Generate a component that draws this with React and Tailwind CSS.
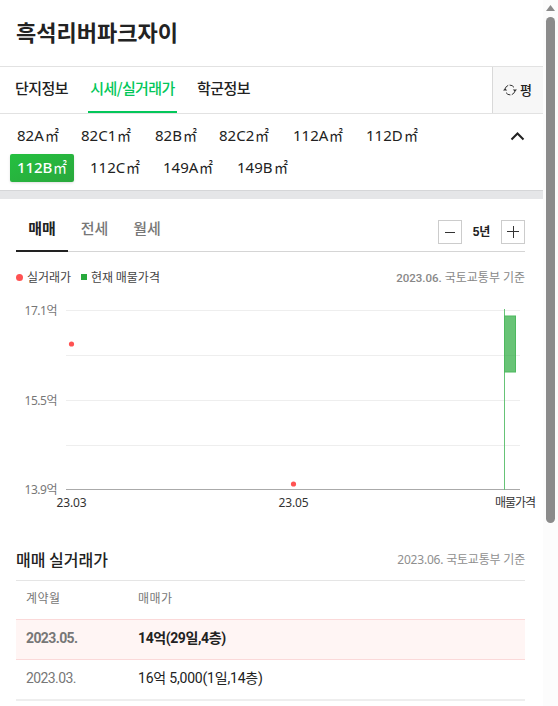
const pageTabs = [
  { name: "단지정보", width: "w-[53px]" },
  { name: "시세/실거래가", width: "w-[89px]" },
  { name: "학군정보", width: "w-[53px]" },
];

const areaRows = [
  [
    { name: "82A", width: "w-[55px]" },
    { name: "82C1", width: "w-[65px]" },
    { name: "82B", width: "w-[55px]" },
    { name: "82C2", width: "w-[65px]" },
    { name: "112A", width: "w-[64px]" },
    { name: "112D", width: "w-[64px]" },
  ],
  [
    { name: "112B", width: "w-[64px]" },
    { name: "112C", width: "w-[64px]" },
    { name: "149A", width: "w-[65px]" },
    { name: "149B", width: "w-[64px]" },
  ],
];

const gridLines = [11.5, 56.5, 101.5, 146.5];

const yLabels = [
  { label: "17.1억", y: 16 },
  { label: "15.5억", y: 106 },
  { label: "13.9억", y: 195 },
];

const deals = [
  { month: "2023.05.", price: "14억(29일,4층)", active: true },
  { month: "2023.03.", price: "16억 5,000(1일,14층)", active: false },
];

const RefreshIcon = () => (
  <svg width="14" height="12" viewBox="0 0 14 12" fill="none" stroke="#333" strokeWidth="1">
    <path d="M2.1 4.8A5 5 0 0 1 5.2 1.4M6.6 1.1A5 5 0 0 1 11 3.4" />
    <path d="M11.9 7.2A5 5 0 0 1 8.8 10.6M7.4 10.9A5 5 0 0 1 3 8.6" />
    <path d="M0 6.6h4.2L2.1 4.2zM9.8 5.4H14l-2.1 2.4z" fill="#333" stroke="none" />
  </svg>
);

const PriceChart = () => (
  <svg
    className="-mx-4 block h-[215px] w-[543px]"
    viewBox="0 0 543 215"
    fontFamily="'Noto Sans', 'Noto Sans CJK KR', sans-serif"
    fontSize="12"
  >
    {gridLines.map((y) => (
      <path key={y} d={`M66 ${y}H520`} stroke="#eee" />
    ))}
    <path d="M66 190.5H520" stroke="#aaa" />
    {yLabels.map(({ label, y }) => (
      <text key={label} x="24.5" y={y} fill="#777" textLength="33">
        {label}
      </text>
    ))}
    <circle cx="71.5" cy="45" r="2.6" fill="#ff5252" />
    <circle cx="293.5" cy="185" r="2.6" fill="#ff5252" />
    <path d="M504.5 10V191" stroke="#66c377" />
    <rect x="504.5" y="17" width="11" height="56" fill="#28a93c" fillOpacity="0.7" stroke="#4db95f" />
    <g fill="#333">
      <text x="56.5" y="208" textLength="30">23.03</text>
      <text x="278.5" y="208" textLength="30">23.05</text>
      <text x="495" y="208" textLength="41">매물가격</text>
    </g>
  </svg>
);

const Scrollbar = () => (
  <div className="flex h-full w-[15px] flex-col items-center bg-[#fcfcfc] pt-[5px]">
    <svg width="9" height="6" viewBox="0 0 9 6">
      <path d="M4.5 0L9 6H0z" fill="#8b8b8b" />
    </svg>
    <div className="mt-[6px] h-[506px] w-[9px] rounded-full bg-[#8b8b8b]" />
  </div>
);

const App = () => {
  return (
    <div className="flex h-[706px] w-[558px] overflow-hidden bg-white font-['Noto_Sans_CJK_KR',sans-serif] whitespace-nowrap text-[#222]">
      <main className="flex w-[543px] flex-col">
        <header className="flex h-[66px] items-center px-4 pb-1">
          <h1 className="text-[22px] leading-8 font-bold">흑석리버파크자이</h1>
        </header>

        <nav className="flex h-12 border-y border-[#e2e2e2]">
          <div className="flex flex-1 gap-5 pl-[15px]">
            {pageTabs.map(({ name, width }, i) => (
              <button
                key={name}
                className={`${width} border-b-2 pb-[2px] text-[15px] font-medium tracking-[-0.6px] ${
                  i === 1 ? "border-[#03c75a] text-[#03c75a]" : "border-transparent"
                }`}
              >
                {name}
              </button>
            ))}
          </div>
          <button className="flex w-[51px] items-center gap-1 border-l border-[#d9d9d9] bg-[#f7f7f7] pl-[10px] text-[13px] font-medium">
            <RefreshIcon />
            <span className="-mt-px -ml-px">평</span>
          </button>
        </nav>

        <section className="flex h-[76px] justify-between pt-2 pr-[18px] pl-[10px]">
          <div className="flex flex-col gap-1 font-['Noto_Sans','Noto_Sans_CJK_KR',sans-serif] text-[15px]">
            {areaRows.map((row, r) => (
              <div key={r} className="flex gap-[9px]">
                {row.map(({ name, width }) => (
                  <button
                    key={name}
                    className={`${width} h-7 rounded-xs pb-[2px] pl-[7px] text-left leading-[26px] ${
                      name === "112B"
                        ? "bg-linear-to-br from-[#24c040] to-[#29a83c] font-medium tracking-[-0.1px] text-white shadow-sm"
                        : ""
                    }`}
                  >
                    {name}
                    <span className="ml-px inline-block origin-left scale-x-[0.93] font-['Noto_Sans_CJK_KR',sans-serif] leading-none font-normal">
                      ㎡
                    </span>
                  </button>
                ))}
              </div>
            ))}
          </div>
          <svg className="mt-[9px]" width="15" height="10" viewBox="0 0 15 10" fill="none" stroke="#222" strokeWidth="2">
            <path d="M1.5 8.5L7.5 2.5L13.5 8.5" />
          </svg>
        </section>

        <div className="h-[9px] border-t border-[#d5d6d8] bg-[#e5e6e8]" />

        <section className="flex flex-col px-4 pt-[9px] pr-[18px]">
          <div className="flex h-11 items-stretch justify-between border-b border-[#d5d5d5]">
            <div className="-mb-px flex text-[15px]">
              <button className="w-[52px] border-b-2 border-[#222] pb-[2px] font-bold">매매</button>
              <button className="w-[53px] border-b-2 border-transparent pb-[2px] font-medium text-[#777]">전세</button>
              <button className="w-[52px] border-b-2 border-transparent pb-[2px] font-medium text-[#777]">월세</button>
            </div>
            <div className="mt-3 flex h-6 items-center">
              <button className="flex size-6 items-center justify-center border border-[#ccc]">
                <span className="mt-px h-px w-[10px] bg-[#333]" />
              </button>
              <span className="w-[39px] text-center font-['Liberation_Sans','Noto_Sans_CJK_KR',sans-serif] text-xs font-bold">
                5년
              </span>
              <button className="flex size-6 items-center justify-center border border-[#ccc]">
                <svg width="12" height="12" viewBox="0 0 12 12" stroke="#333">
                  <path d="M0 5.5H12M6.5 0V12" />
                </svg>
              </button>
            </div>
          </div>

          <div className="flex h-[47px] items-center pt-[3px] text-xs text-[#444]">
            <span className="mr-1 size-[7px] rounded-full bg-[#ff5252]" />
            <span className="w-[54px]">실거래가</span>
            <span className="mr-1 size-[6px] bg-[#28a93c]" />
            <span>현재 매물가격</span>
            <span className="mt-[2px] ml-auto font-['Roboto','Noto_Sans_CJK_KR',sans-serif] text-[#888]">
              <span className="text-[11.5px] font-medium">2023.06.</span> 국토교통부 기준
            </span>
          </div>

          <PriceChart />

          <div className="mt-[26px] flex h-10 items-center justify-between">
            <h2 className="-mt-[3px] text-base font-medium">매매 실거래가</h2>
            <span className="font-['Noto_Sans','Noto_Sans_CJK_KR',sans-serif] text-xs tracking-[-0.2px] text-[#8f8f8f]">
              2023.06. 국토교통부 기준
            </span>
          </div>

          <div className="border-t border-b-2 border-[#e5e5e5] border-b-[#eee]">
            <div className="flex h-[38px] items-center pb-[4px] pl-[10px] text-xs tracking-[0.4px] text-[#777]">
              <span className="w-28">계약월</span>
              <span>매매가</span>
            </div>
            {deals.map(({ month, price, active }) => (
              <div
                key={month}
                className={`flex items-center pb-[3px] pl-[10px] font-['Roboto','Noto_Sans_CJK_KR',sans-serif] text-[14px] ${
                  active ? "h-[41px] border-y border-[#fbd9d9] bg-[#fff5f4] font-bold" : "h-[39px]"
                }`}
              >
                <span className="w-28 tracking-[-0.6px] text-[#777]">{month}</span>
                <span className={active ? "tracking-[-0.4px]" : "tracking-[-0.2px]"}>{price}</span>
              </div>
            ))}
          </div>
        </section>
      </main>
      <Scrollbar />
    </div>
  );
};

export default App;
